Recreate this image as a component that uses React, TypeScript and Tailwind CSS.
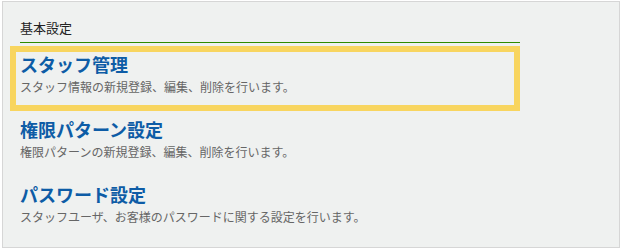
const items = [
  {
    title: "スタッフ管理",
    desc: "スタッフ情報の新規登録、編集、削除を行います。",
    active: true,
  },
  {
    title: "権限パターン設定",
    desc: "権限パターンの新規登録、編集、削除を行います。",
    active: false,
  },
  {
    title: "パスワード設定",
    desc: "スタッフユーザ、お客様のパスワードに関する設定を行います。",
    active: false,
  },
];

export default function App() {
  return (
    <div
      className="min-h-screen bg-white pl-[2px] pt-[1px]"
      style={{ fontFamily: '"Noto Sans CJK JP", "Noto Sans", sans-serif' }}
    >
      <div className="w-[618px] h-[247px] border border-[#d6d6d6] bg-[#eff1f0] pt-[16px] pl-[7px]">
        <div className="w-[510px]">
          {/* Section heading */}
          <div className="ml-[10px] border-b border-[#2e8b00] pb-[4px] text-[13px] leading-[20px] text-[#222]">
            基本設定
          </div>

          <div className="mt-[3px]">
            {items.map((item) => (
              <div
                key={item.title}
                className={`border-[6px] pl-[4px] pt-0 pb-[9px] ${
                  item.active ? "border-[#f8d55f]" : "border-transparent"
                }`}
              >
                <div className="text-[18px] leading-[24px] font-bold text-[#0d5ca6]">
                  {item.title}
                </div>
                <div className="mt-[2px] text-[12px] leading-[18px] text-[#666]">
                  {item.desc}
                </div>
              </div>
            ))}
          </div>
        </div>
      </div>
    </div>
  );
}
